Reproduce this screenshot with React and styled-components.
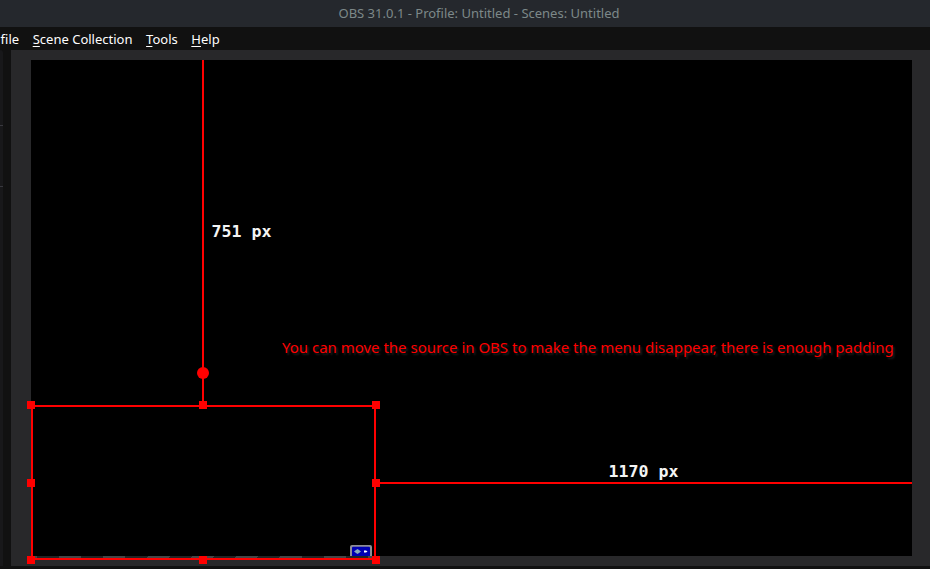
import React from "react";
import styled, { createGlobalStyle } from "styled-components";

const GlobalStyle = createGlobalStyle`
  * { box-sizing: border-box; }
  body { margin: 0; background: #111111; overflow: hidden; }
`;

const Window = styled.div`
  width: 930px;
  height: 569px;
  display: grid;
  grid-template-rows: 27px 23px 516px;
  overflow: hidden;
  background: #111111;
  font-family: "Noto Sans", sans-serif;
`;

const TitleBar = styled.header`
  padding-left: 28px;
  background: #25282d;
  color: #7d8889;
  font-size: 13px;
  line-height: 27px;
  text-align: center;
`;

const MenuBar = styled.nav`
  display: flex;
  gap: 13.6px;
  padding-left: 0.6px;
  background: #111111;
  color: #fefefe;
  font-size: 13px;
  line-height: 25px;
  white-space: pre;
`;

const MenuItem = styled.span`
  flex: none;
`;

const Mnemonic = styled.span`
  text-decoration: underline;
  text-decoration-thickness: 1px;
  text-underline-offset: 2px;
  text-decoration-skip-ink: none;
`;

const Main = styled.main`
  display: flex;
  gap: 8px;
`;

const DockEdge = styled.aside`
  width: 3px;
  display: flex;
  flex-direction: column;
  gap: 60px;
  padding-top: 75px;
  background: #18181a;
  border-top-right-radius: 3px;
`;

const DockRule = styled.div`
  height: 1px;
  background: #38383e;
`;

const Preview = styled.section`
  flex: 1;
  padding: 10px 18px 10px 20px;
  background: #28282a;
`;

const Canvas = styled.div`
  position: relative;
  height: 496px;
  background: #000000;
`;

const Guide = styled.div`
  position: absolute;
  left: ${(p) => p.$x}px;
  top: ${(p) => p.$y}px;
  width: ${(p) => p.$w}px;
  height: ${(p) => p.$h}px;
  background: #ff0000;
`;

const Selection = styled.div`
  position: absolute;
  left: -4px;
  top: 341px;
  width: 353px;
  height: 163px;
  display: grid;
  grid-template-columns: 172px 173px 8px;
  grid-template-rows: 78px 77px 8px;

  &::before {
    content: "";
    position: absolute;
    inset: 4px;
    border: 2px solid #ff0000;
  }
`;

const Handle = styled.div`
  width: 8px;
  height: 8px;
  background: ${(p) => (p.$hidden ? "transparent" : "#ff0000")};
`;

const RotateHandle = styled.div`
  position: absolute;
  left: 166.4px;
  top: 307px;
  width: 12px;
  height: 12px;
  border-radius: 50%;
  background: #ff0000;
`;

const Overflow = styled.div`
  position: absolute;
  left: 2px;
  top: 496px;
  width: 341px;
  height: 2px;
  background: repeating-linear-gradient(
    115deg,
    #464647 0 4px,
    #242425 4px 24px,
    #464647 24px 40px
  );
`;

const Distance = styled.span`
  position: absolute;
  left: ${(p) => p.$x}px;
  top: ${(p) => p.$y}px;
  color: #f4f4f4;
  font: bold 16.6px/20px "DejaVu Sans Mono", monospace;
  white-space: pre;
`;

const Note = styled.p`
  position: absolute;
  left: 251px;
  top: 277px;
  margin: 0;
  color: #ff0000;
  font-size: 14.99px;
  line-height: 20px;
  white-space: nowrap;
  text-shadow: 2px 2px 2px #202020;
`;

const MenuIcon = styled.svg`
  position: absolute;
  left: 319px;
  top: 485px;
`;

const handles = ["nw", "n", "ne", "w", "center", "e", "sw", "s", "se"];

const menus = [
  { text: "file" },
  { key: "S", text: "cene Collection" },
  { key: "T", text: "ools" },
  { key: "H", text: "elp" },
];

export default function App() {
  return (
    <Window>
      <GlobalStyle />
      <TitleBar>OBS 31.0.1 - Profile: Untitled - Scenes: Untitled</TitleBar>
      <MenuBar>
        {menus.map((m) => (
          <MenuItem key={m.text}>
            {m.key && <Mnemonic>{m.key}</Mnemonic>}
            {m.text}
          </MenuItem>
        ))}
      </MenuBar>
      <Main>
        <DockEdge>
          <DockRule />
          <DockRule />
        </DockEdge>
        <Preview>
          <Canvas>
            <Overflow />
            <MenuIcon width="22" height="11" viewBox="0 0 22 11">
              <path d="M0 11V2Q0 0 2 0H20Q22 0 22 2V11Z" fill="#8e8e96" />
              <path d="M2 11V2.7Q2 1.7 3 1.7H19Q20 1.7 20 2.7V11Z" fill="#0000b4" />
              <path d="M4 6.5 6 5 7.5 4 9 5 11 6.5 9 8 7.5 9 6 8Z" fill="#86aabd" />
              <path d="M14 5.5h2l1.5 1-1.5 1h-2z" fill="#ffffff" />
            </MenuIcon>
            <Guide $x={171} $y={0} $w={2} $h={345} />
            <Guide $x={345} $y={422} $w={536} $h={2} />
            <Selection>
              {handles.map((name) => (
                <Handle key={name} $hidden={name === "center"} />
              ))}
            </Selection>
            <RotateHandle />
            <Distance $x={180.5} $y={162}>751 px</Distance>
            <Distance $x={577.6} $y={402}>1170 px</Distance>
            <Note>You can move the source in OBS to make the menu disappear, there is enough padding</Note>
          </Canvas>
        </Preview>
      </Main>
    </Window>
  );
}
